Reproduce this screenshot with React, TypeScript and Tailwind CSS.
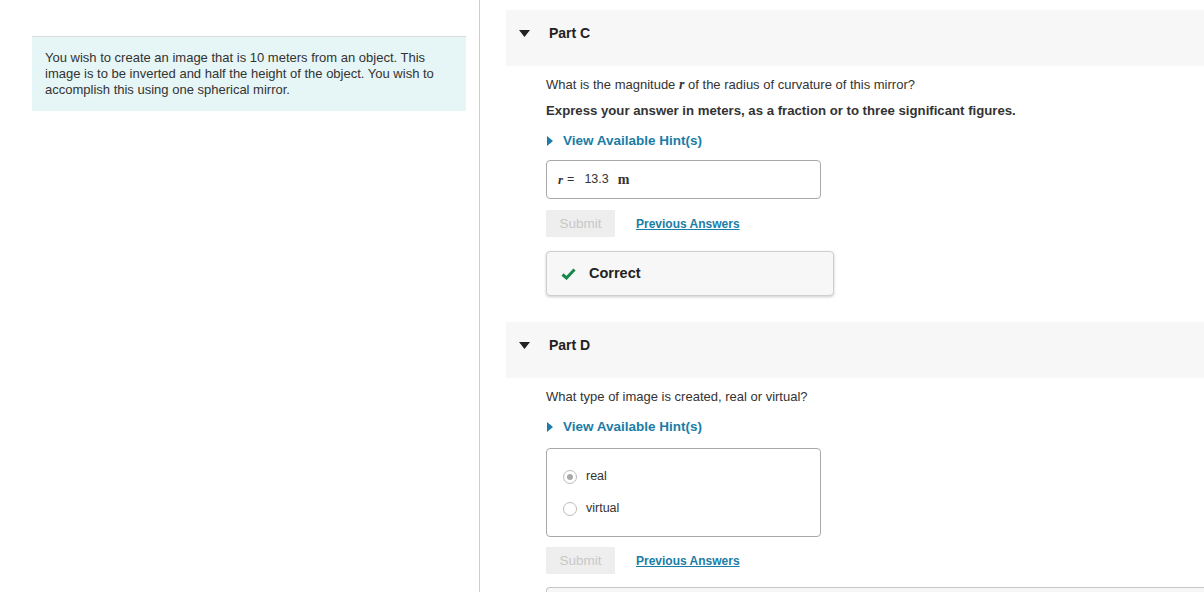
import React from "react";

const serif = { fontFamily: '"Liberation Serif", serif' };

const Caret = () => (
	<svg width="11" height="7" viewBox="0 0 11 7" className="block">
		<path d="M0 0 H11 L5.5 7 Z" fill="#222" />
	</svg>
);

const HintToggle = () => (
	<div className="flex items-center text-[13.5px] leading-[18px] font-bold text-[#1a7da6]">
		<svg width="6" height="10" viewBox="0 0 6 10" className="ml-px mr-[10px]">
			<path d="M0 0 L6 5 L0 10 Z" fill="#1a7da6" />
		</svg>
		View Available Hint(s)
	</div>
);

const PartHeader = ({ label }: { label: string }) => (
	<div className="flex h-[56px] shrink-0 items-center bg-[#f7f7f7] pb-[9px]">
		<div className="ml-[13px] mr-[19px]">
			<Caret />
		</div>
		<span className="text-[14px] font-bold text-[#222]">{label}</span>
	</div>
);

const SubmitRow = () => (
	<div className="flex items-center">
		<div className="flex h-[27px] w-[69px] items-center justify-center bg-[#eeeeee] pt-px text-[13.5px] text-[#c8c8c8]">
			Submit
		</div>
		<span className="ml-[21px] text-[12px] font-bold text-[#1a7da6] underline">
			Previous Answers
		</span>
	</div>
);

const Radio = ({ checked, label }: { checked?: boolean; label: string }) => (
	<div className="flex h-[16px] items-center text-[12.5px] text-[#333]">
		<span className="mr-[9px] flex h-[14px] w-[14px] items-center justify-center rounded-full border border-[#bbb] bg-white">
			{checked && <span className="h-[6px] w-[6px] rounded-full bg-[#aaa]" />}
		</span>
		{label}
	</div>
);

export default function App() {
	return (
		<div
			className="flex h-[592px] w-[1204px] overflow-hidden bg-white text-[#333]"
			style={{ fontFamily: '"Liberation Sans", Arial, sans-serif' }}
		>
			{/* left column */}
			<div className="w-[480px] shrink-0 border-r border-[#c9ced3]">
				<div className="ml-[32px] mt-[36px] w-[434px] border-t border-[#d8dcdc] bg-[#e6f5f5] px-[13px] pb-[13px] pt-[13px] text-[13px] leading-[16px] text-[#333]">
					You wish to create an image that is 10 meters from an object. This
					image is to be inverted and half the height of the object. You wish to
					accomplish this using one spherical mirror.
				</div>
			</div>

			{/* right column */}
			<div className="flex min-w-0 flex-1 flex-col pl-[26px] pt-[10px]">
				<PartHeader label="Part C" />
				<div className="flex shrink-0 flex-col pl-[40px]">
					<p className="mt-[11px] text-[13px] leading-[16px]">
						What is the magnitude{" "}
						<i className="text-[14px] font-bold" style={serif}>
							r
						</i>{" "}
						of the radius of curvature of this mirror?
					</p>
					<p className="mt-[9px] text-[13.2px] font-bold leading-[18px] text-[#333]">
						Express your answer in meters, as a fraction or to three significant
						figures.
					</p>
					<div className="mt-[12px]">
						<HintToggle />
					</div>
					<div className="mt-[10px] flex h-[39px] w-[275px] items-center rounded-[4px] border border-[#a9a9a9] pl-[11px] text-[12.5px]">
						<i className="text-[13px] font-bold" style={serif}>
							r
						</i>
						<span className="ml-[4px]">=</span>
						<span className="ml-[10px]">13.3</span>
						<span className="ml-[9px] text-[14px] font-bold" style={serif}>
							m
						</span>
					</div>
					<div className="mt-[11px]">
						<SubmitRow />
					</div>
					<div className="mt-[14px] flex h-[45px] w-[288px] items-center rounded-[4px] border border-[#cfcfcf] bg-[#f7f7f7] pl-[14px] shadow-[0_1px_3px_rgba(0,0,0,0.2)]">
						<svg width="15" height="12" viewBox="0 0 15 12">
							<path
								d="M1.5 6.5 L5.5 10 L13.5 1.5"
								fill="none"
								stroke="#15884a"
								strokeWidth="3"
							/>
						</svg>
						<span className="ml-[13px] text-[14.5px] font-bold text-[#222]">
							Correct
						</span>
					</div>
				</div>

				<div className="mt-[26px] shrink-0">
					<PartHeader label="Part D" />
				</div>
				<div className="flex shrink-0 flex-col pl-[40px]">
					<p className="mt-[11px] text-[13px] leading-[16px]">
						What type of image is created, real or virtual?
					</p>
					<div className="mt-[13px]">
						<HintToggle />
					</div>
					<div className="mt-[12px] flex h-[89px] w-[275px] flex-col justify-center gap-[16px] rounded-[4px] border border-[#a9a9a9] pl-[16px]">
						<Radio checked label="real" />
						<Radio label="virtual" />
					</div>
					<div className="mt-[10px]">
						<SubmitRow />
					</div>
					<div className="mt-[13px] h-[20px] rounded-tl-[4px] border-l border-t border-[#c6c6c6] bg-[#f7f7f7]" />
				</div>
			</div>
		</div>
	);
}
